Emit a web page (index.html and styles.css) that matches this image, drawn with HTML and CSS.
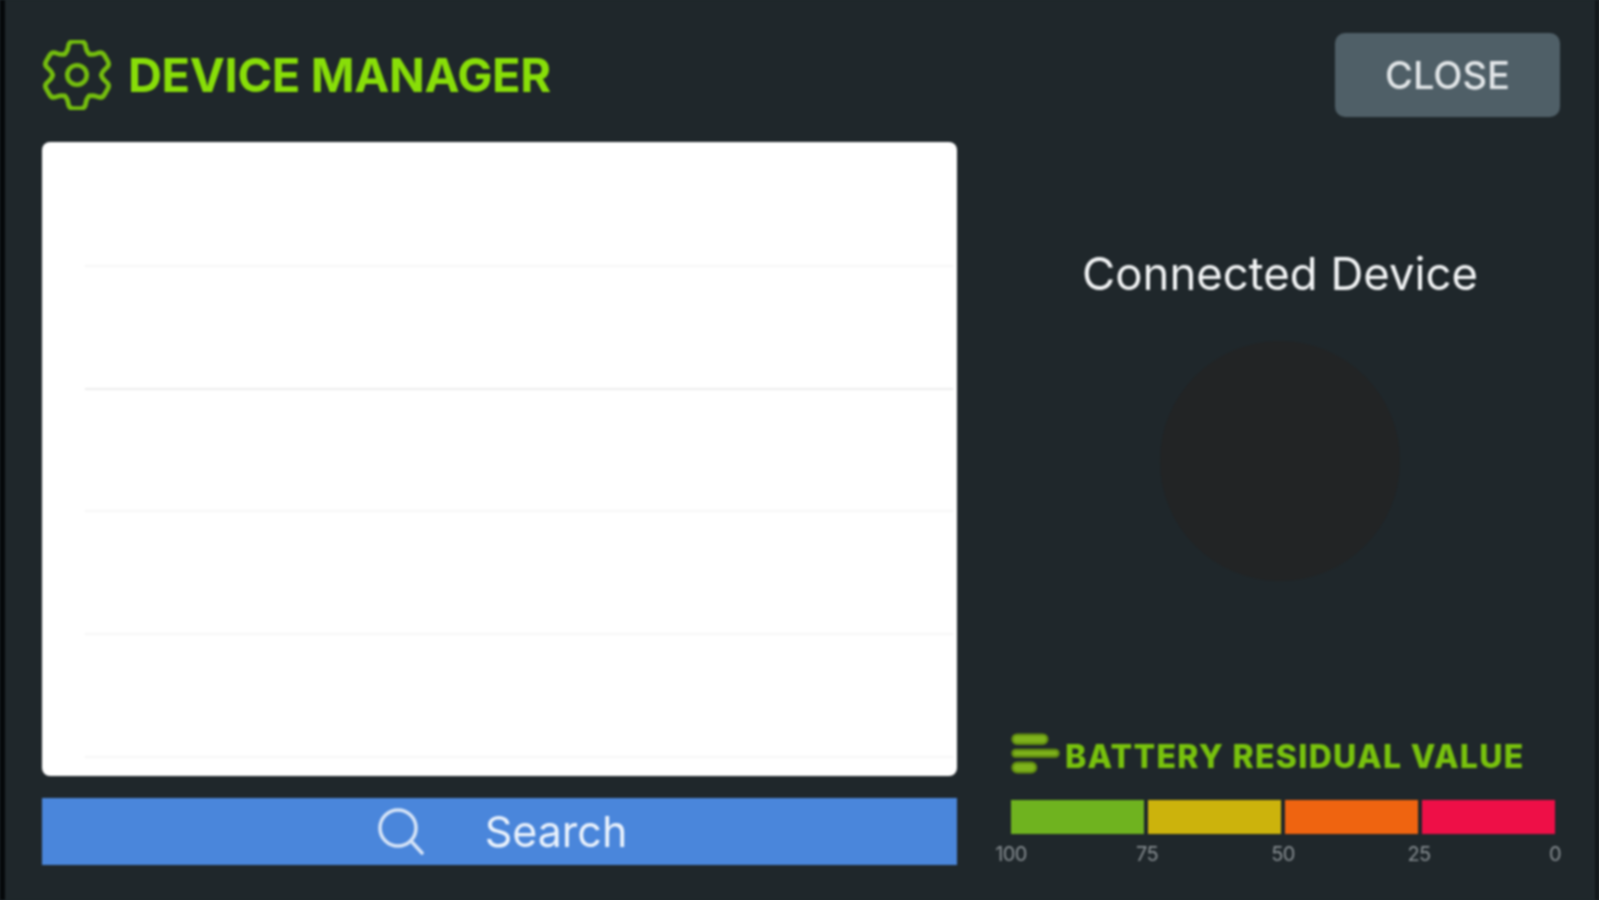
FILE: index.html
```html
<!DOCTYPE html>
<html lang="en">
<head>
<meta charset="utf-8">
<title>Device Manager</title>
<link rel="stylesheet" href="styles.css">
</head>
<body>
<div class="app">
  <header class="header">
    <div class="brand">
      <svg class="gear" viewBox="-36 -36 72 72" aria-hidden="true">
        <defs>
          <path id="tooth" d="M-12.5-21.7C-10.5-23.5-9.5-25.5-9-29Q-8.4-34.5-3.5-34.5H3.5Q8.4-34.5 9-29C9.5-25.5 10.5-23.5 12.5-21.7"/>
        </defs>
        <g class="gear-lines">
          <use href="#tooth"/>
          <use href="#tooth" transform="rotate(60)"/>
          <use href="#tooth" transform="rotate(120)"/>
          <use href="#tooth" transform="rotate(180)"/>
          <use href="#tooth" transform="rotate(240)"/>
          <use href="#tooth" transform="rotate(300)"/>
          <circle r="10"/>
        </g>
      </svg>
      <h1 class="title">DEVICE MANAGER</h1>
    </div>
    <button class="close" type="button">CLOSE</button>
  </header>
  <main class="main">
    <section class="left">
      <ul class="list">
        <li class="row"></li>
        <li class="row row-strong"></li>
        <li class="row"></li>
        <li class="row"></li>
        <li class="row"></li>
      </ul>
      <button class="search" type="button">
        <svg class="search-icon" viewBox="0 0 48 48" aria-hidden="true">
          <circle cx="21" cy="21" r="18"/>
          <path d="M34 34 45 46"/>
        </svg>
        <span>Search</span>
      </button>
    </section>
    <section class="right">
      <div class="device">
        <h2 class="device-title">Connected Device</h2>
        <div class="device-circle"></div>
      </div>
      <div class="battery">
        <div class="battery-head">
          <svg class="battery-icon" viewBox="0 0 48 40" aria-hidden="true">
            <rect x="1.5" y="1.5" width="34" height="9" rx="4.5"/>
            <rect x="1.5" y="16.5" width="45" height="6.5" rx="3.2"/>
            <rect x="1.5" y="29" width="23" height="9.5" rx="4.7"/>
          </svg>
          <h3 class="battery-title">BATTERY RESIDUAL VALUE</h3>
        </div>
        <div class="bar">
          <div class="seg seg-green"></div>
          <div class="seg seg-yellow"></div>
          <div class="seg seg-orange"></div>
          <div class="seg seg-red"></div>
        </div>
        <div class="scale">
          <span>100</span><span>75</span><span>50</span><span>25</span><span>0</span>
        </div>
      </div>
    </section>
  </main>
</div>
</body>
</html>
```
FILE: styles.css
```css
* { box-sizing: border-box; }
html, body { margin: 0; padding: 0; background: #1f272b; }
ul { list-style: none; margin: 0; padding: 0; }
h1, h2, h3 { margin: 0; font-weight: inherit; }
button { border: 0; font: inherit; }

.app {
  width: 1599px;
  height: 900px;
  overflow: hidden;
  display: flex;
  flex-direction: column;
  padding: 33px 35px 35px 37px;
  background: #1f272b;
  border-left: 5px solid #05080a;
  border-right: 4px solid #12171a;
  font-family: Inter, "Liberation Sans", sans-serif;
  filter: blur(1px);
}

.header {
  height: 84px;
  display: flex;
  justify-content: space-between;
  align-items: flex-start;
}
.brand { display: flex; align-items: center; height: 83px; }
.gear { width: 70px; height: 70px; margin-right: 16px; flex: none; }
.gear-lines { fill: none; stroke: #74bd0e; stroke-width: 4.8; stroke-linejoin: round; stroke-linecap: round; }
.gear-lines use { fill: none; }
.title {
  font-size: 47px;
  font-weight: 700;
  letter-spacing: -0.35px;
  color: #88de08;
  line-height: 1;
  white-space: nowrap;
}
.close {
  width: 225px;
  height: 84px;
  border-radius: 10px;
  background: #4f5f67;
  color: #e2e6e8;
  font-size: 38px;
  font-weight: 500;
  font-family: inherit;
}

.main {
  margin-top: 25px;
  display: grid;
  grid-template-columns: 915px 1fr;
  flex: 1;
  min-height: 0;
}
.left { display: flex; flex-direction: column; gap: 22px; }
.list {
  height: 634px;
  background: #fff;
  border-radius: 8px;
  padding-top: 2px;
  overflow: hidden;
}
.row {
  height: 122.8px;
  margin-left: 43px;
  margin-right: 4px;
  border-bottom: 2px solid #f6f6f6;
}
.row-strong { border-bottom-color: #ececec; }
.search {
  height: 67px;
  background: #4a86db;
  color: #eaf2fc;
  display: flex;
  justify-content: center;
  align-items: center;
  gap: 60px;
  padding: 0 0 2px 5px;
  font-family: inherit;
  font-size: 43px;
}
.search-icon { width: 48px; height: 48px; fill: none; stroke: #d6e4f7; stroke-width: 3.6; stroke-linecap: round; }

.right {
  padding-left: 54px;
  padding-right: 5px;
  display: flex;
  flex-direction: column;
  justify-content: space-between;
}
.device { display: flex; flex-direction: column; align-items: center; padding-top: 99px; padding-right: 6px; }
.device-title { font-size: 45.5px; font-weight: 400; color: #f2f4f5; line-height: 66px; white-space: nowrap; }
.device-circle { width: 240px; height: 240px; margin-top: 34px; border-radius: 50%; background: #222425; }

.battery { margin-bottom: -1px; }
.battery-head { display: flex; align-items: flex-start; gap: 5px; }
.battery-icon { width: 49px; height: 41px; flex: none; fill: #7fb31c; stroke: #628f10; stroke-width: 2.4; }
.battery-title { margin-top: 6px; font-size: 32px; font-weight: 800; color: #78c20d; white-space: nowrap; letter-spacing: 1.3px; line-height: 35px; }
.bar { margin-top: 26px; height: 34px; display: flex; gap: 4px; }
.seg { flex: 1; }
.seg-green { background: #6fb31f; }
.seg-yellow { background: #ccb30c; }
.seg-orange { background: #ef6410; }
.seg-red { background: #ee0f47; }
.scale {
  margin: 8px -18px 0;
  display: flex;
  justify-content: space-between;
  color: #868d91;
  font-size: 20px;
  letter-spacing: -0.7px;
  line-height: 24px;
}
.scale span { width: 36px; text-align: center; }
```
